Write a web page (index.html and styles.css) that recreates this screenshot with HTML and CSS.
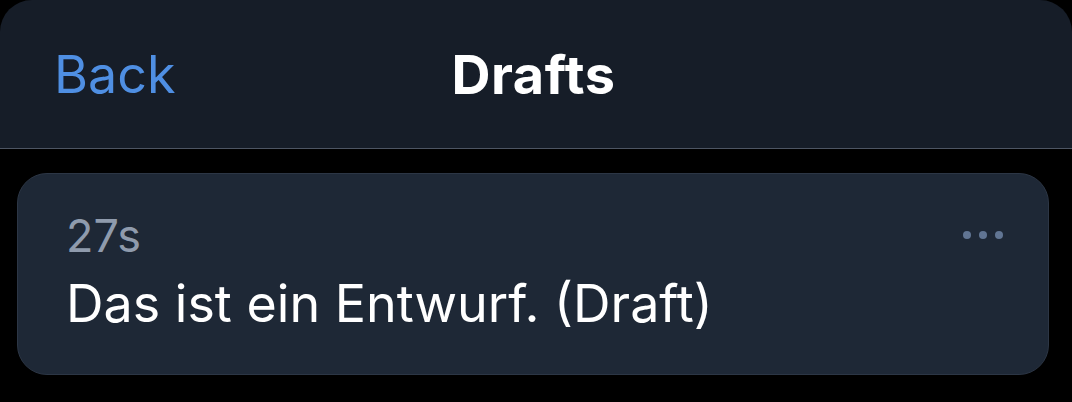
FILE: index.html
```html
<!DOCTYPE html>
<html lang="en">
  <head>
    <meta charset="UTF-8" />
    <meta name="viewport" content="width=device-width, initial-scale=1.0" />
    <title>Drafts</title>
    <link rel="stylesheet" href="styles.css">
  </head>
  <body>
    <div class="header">
      <a class="back" href="#">Back</a>
      <div class="title">Drafts</div>
    </div>
    <div class="draft">
      <div class="meta">
        <span class="age">27s</span>
        <button class="more" aria-label="More">
          <span class="dot"></span><span class="dot"></span><span class="dot"></span>
        </button>
      </div>
      <div class="text">Das ist ein Entwurf. (Draft)</div>
    </div>
  </body>
</html>
```

FILE: styles.css
```css
body,
html {
  margin: 0;
  padding: 0;
  background-color: black;
  font-family: Inter, "Noto Sans", sans-serif;
}
.header {
  position: relative;
  height: 148px;
  background-color: #161d28;
  border-bottom: 1px solid #4d5563;
  border-radius: 32px 32px 0 0;
  display: flex;
  align-items: center;
  justify-content: center;
}
.back {
  position: absolute;
  left: 54px;
  top: 44px;
  font-size: 52px;
  line-height: 62px;
  color: #4f8fe3;
  text-decoration: none;
}
.title {
  font-size: 54px;
  line-height: 62px;
  font-weight: 700;
  letter-spacing: 0.6px;
  color: white;
  margin: 2px 0 0 -5px;
}
.draft {
  margin: 24px 23px 0 17px;
  padding: 35px 45px 39px 48px;
  background-color: #1e2836;
  border: 1px solid #2c3645;
  border-radius: 30px;
}
.meta {
  display: flex;
  justify-content: space-between;
  align-items: center;
}
.age {
  font-size: 45px;
  line-height: 54px;
  color: #8f9bad;
}
.more {
  display: flex;
  gap: 8px;
  padding: 0;
  border: none;
  background: none;
  cursor: pointer;
  margin-top: -2px;
}
.dot {
  width: 8px;
  height: 8px;
  border-radius: 50%;
  background-color: #617593;
}
.text {
  margin-top: 10px;
  font-size: 52px;
  line-height: 62px;
  color: white;
}
```
